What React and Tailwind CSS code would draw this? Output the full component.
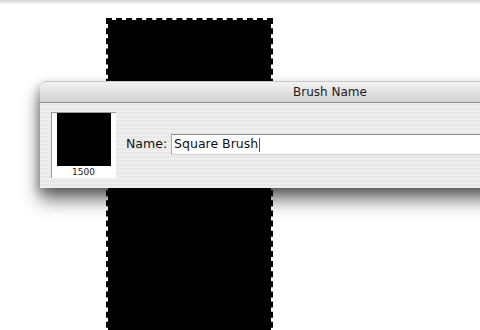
export default function App() {
  const font = { fontFamily: '"DejaVu Sans", "Liberation Sans", sans-serif' };
  return (
    <div className="relative w-[480px] h-[330px] overflow-hidden bg-white" style={font}>
      <div className="h-[4px] bg-gradient-to-b from-[#d4d4d4] to-[#f7f7f7]" />
      <div className="absolute left-[106px] top-[18px] w-[167px] h-[330px] bg-black bg-clip-padding border-2 border-dashed border-black" />
      <div className="absolute left-[40px] top-[81px] w-[580px] rounded-tl-[6px] rounded-tr-[6px] shadow-[0_12px_18px_rgba(0,0,0,0.55),-2px_4px_10px_rgba(0,0,0,0.25)]">
        <div className="h-[22px] rounded-tl-[6px] rounded-tr-[6px] border-t border-[#c8c8c8] border-b border-b-[#8f8f8f] bg-gradient-to-b from-[#f2f2f2] to-[#d3d3d3] flex items-center justify-center text-[12px] text-[#1a1a1a]">
          Brush Name
        </div>
        <div className="h-[85px] flex items-start pl-[11px] pt-[9px] bg-[repeating-linear-gradient(0deg,#efefef_0px,#efefef_2px,#e8e8e8_2px,#e8e8e8_4px)]">
          <div className="w-[65px] h-[66px] bg-white border-l border-t border-[#9a9a9a] flex flex-col">
            <div className="ml-[5px] w-[54px] h-[53px] bg-black" />
            <div className="text-[9px] leading-[12px] text-center text-[#222] ml-[-1px]">1500</div>
          </div>
          <div className="flex items-center ml-[10px] mt-[22px] flex-1">
            <span className="text-[12.5px] text-[#111]">Name:</span>
            <div className="ml-[4px] flex-1 h-[21px] bg-white border-t border-t-[#8a8a8a] border-l border-l-[#a8a8a8] border-b border-b-[#cfcfcf] flex items-center pl-[2px]">
              <span className="text-[12.5px] text-[#111] leading-none">Square Brush</span>
              <span className="w-[1px] h-[14px] bg-[#555] ml-[1px]" />
            </div>
          </div>
        </div>
      </div>
    </div>
  );
}
